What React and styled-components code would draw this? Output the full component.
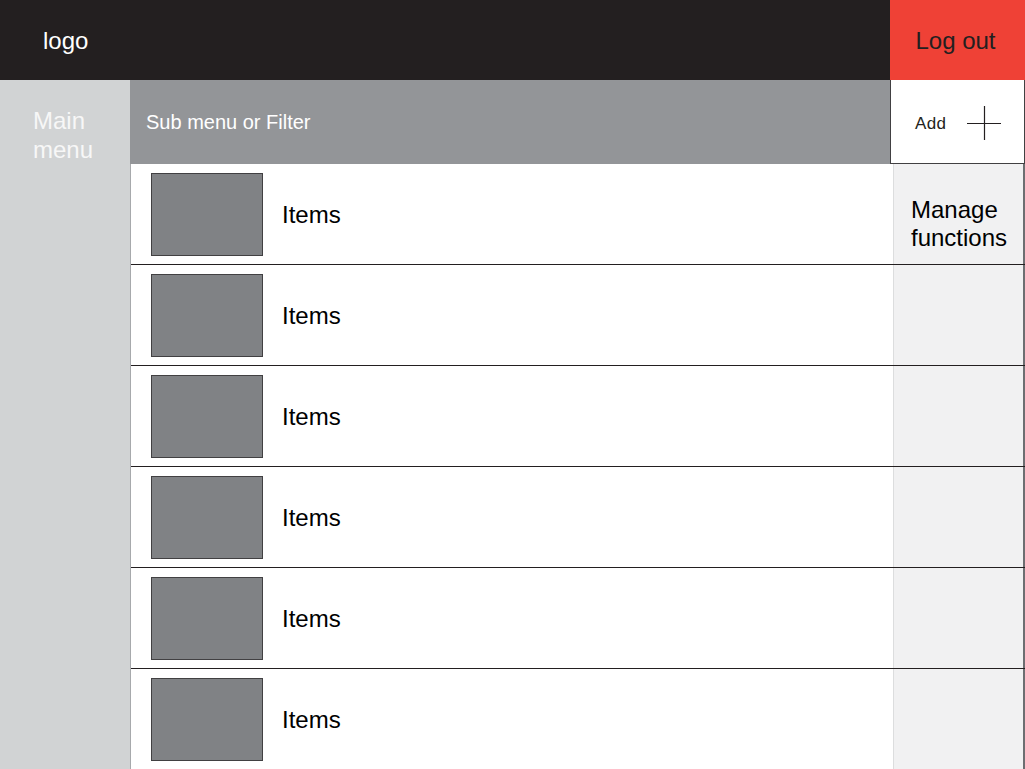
import React from "react";
import styled, { createGlobalStyle } from "styled-components";

const items = ["Items", "Items", "Items", "Items", "Items", "Items"];

const App = () => {
  // RENDER
  return (
    <>
      <GlobalStyle />
      <Page>
        <Header>
          <Logo>logo</Logo>
          <LogoutButton>Log out</LogoutButton>
        </Header>
        <Body>
          <MainMenu>
            Main
            <br />
            menu
          </MainMenu>
          <Content>
            <SubBar>
              <SubTitle>Sub menu or Filter</SubTitle>
              <AddButton>
                <span>Add</span>
                <svg width="34" height="34" viewBox="0 0 34 34">
                  <path d="M0 17.5H34M17.5 0V34" stroke="#231f20" strokeWidth="1.2" fill="none" />
                </svg>
              </AddButton>
            </SubBar>
            <List>
              {items.map((label, i) => (
                <Row key={i}>
                  <ItemCell>
                    <Thumb />
                    <ItemLabel>{label}</ItemLabel>
                  </ItemCell>
                  <ManageCell>
                    {i === 0 && (
                      <>
                        Manage
                        <br />
                        functions
                      </>
                    )}
                  </ManageCell>
                </Row>
              ))}
            </List>
          </Content>
        </Body>
      </Page>
    </>
  );
};

export default App;

// STYLES

const GlobalStyle = createGlobalStyle`
  html, body {
    margin: 0;
    padding: 0;
    background: #ffffff;
    overflow: hidden;
  }
  body {
    font-family: "Liberation Sans", Arial, sans-serif;
  }
`;

const Page = styled.div`
  width: 1025px;
  height: 769px;
  display: grid;
  grid-template-rows: 80px 1fr;
  overflow: hidden;
`;

const Header = styled.header`
  display: flex;
  align-items: stretch;
  background: #231f20;
`;

const Logo = styled.div`
  flex: 1;
  display: flex;
  align-items: center;
  padding: 2px 0 0 43px;
  font-size: 24px;
  color: #ffffff;
`;

const LogoutButton = styled.button`
  width: 135px;
  border: none;
  margin: 0;
  padding: 2px 4px 0 0;
  background: #ef4136;
  color: #231f20;
  font-family: "Liberation Sans", Arial, sans-serif;
  font-size: 24px;
  cursor: pointer;
`;

const Body = styled.div`
  display: grid;
  grid-template-columns: 130px 1fr;
  min-height: 0;
`;

const MainMenu = styled.nav`
  background: #d1d3d4;
  color: #f7f7f7;
  font-size: 24px;
  line-height: 29px;
  padding: 26px 0 0 33px;
`;

const Content = styled.div`
  display: flex;
  flex-direction: column;
  min-width: 0;
`;

const SubBar = styled.div`
  height: 84px;
  display: flex;
  align-items: stretch;
  background: #939598;
`;

const SubTitle = styled.div`
  flex: 1;
  display: flex;
  align-items: center;
  padding-left: 16px;
  padding-top: 1px;
  font-size: 20px;
  color: #ffffff;
`;

const AddButton = styled.div`
  width: 135px;
  box-sizing: border-box;
  display: flex;
  align-items: center;
  gap: 21px;
  padding: 3px 0 0 24px;
  background: #ffffff;
  border-left: 1px solid #414042;
  border-right: 1px solid #414042;
  border-bottom: 1px solid #414042;
  font-size: 17px;
  letter-spacing: 0.4px;
  color: #231f20;

  span {
    margin-top: 2px;
  }
`;

const List = styled.div`
  flex: 1;
  display: flex;
  flex-direction: column;
  border-left: 1px solid #a7a9ac;
`;

const Row = styled.div`
  height: 101px;
  flex-shrink: 0;
  display: flex;
  box-sizing: border-box;
  border-bottom: 1px solid #231f20;
  background: #ffffff;
`;

const ItemCell = styled.div`
  flex: 1;
  display: flex;
  align-items: center;
  padding: 1px 0 0 20px;
`;

const Thumb = styled.div`
  width: 110px;
  height: 81px;
  background: #808285;
  border: 1px solid #414042;
`;

const ItemLabel = styled.span`
  margin: 0 0 0 19px;
  font-size: 24px;
  color: #000000;
`;

const ManageCell = styled.div`
  width: 132px;
  box-sizing: border-box;
  background: #f1f1f2;
  border-left: 1px solid #dcddde;
  border-right: 2px solid #6d6e71;
  padding: 32px 0 0 17px;
  font-size: 24px;
  line-height: 28px;
  color: #000000;
`;
